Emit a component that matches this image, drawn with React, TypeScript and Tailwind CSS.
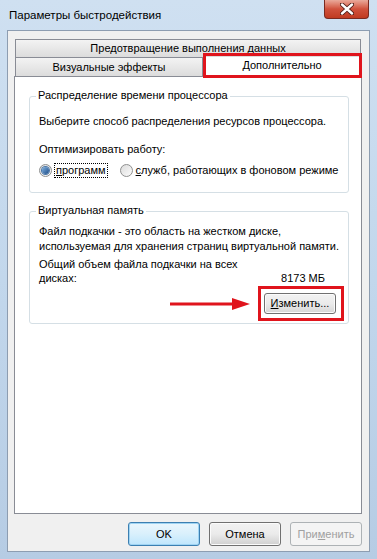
const font = { fontFamily: '"Liberation Sans", Arial, sans-serif' };

function Radio({ checked }: { checked?: boolean }) {
  return (
    <span className="flex h-[13px] w-[13px] shrink-0 items-center justify-center rounded-full border border-[#8e8f8f] bg-gradient-to-br from-[#dcdcdc] to-[#fbfbfb]">
      {checked && (
        <span className="h-[7px] w-[7px] rounded-full bg-gradient-to-br from-[#7fb2e2] to-[#1d4c86] ring-1 ring-[#4a77a8]" />
      )}
    </span>
  );
}

function Group({ title, className, children }: { title: string; className: string; children: React.ReactNode }) {
  return (
    <div className={`relative mx-[14px] mr-[12px] rounded-[3px] border border-[#d5dfe5] px-[9px] ${className}`}>
      <span className="absolute -top-[9px] left-[6px] bg-white px-[2px] leading-[15px]">{title}</span>
      {children}
    </div>
  );
}

function Btn({ children, variant }: { children: React.ReactNode; variant?: 'default' | 'disabled' }) {
  const look =
    variant === 'default'
      ? 'border-[#3c7fb1] bg-gradient-to-b from-[#eaf6fd] via-[#d9f0fc] to-[#bee6fd] shadow-[inset_0_0_0_1px_#9fd4f3]'
      : variant === 'disabled'
        ? 'border-[#adb2b5] bg-[#f4f4f4] text-[#a0a0a0]'
        : 'border-[#707070] bg-gradient-to-b from-[#f2f2f2] via-[#ebebeb] to-[#cfcfcf] shadow-[inset_0_0_0_1px_#fbfbfb]';
  return (
    <div className={`flex h-[24px] w-[72px] items-center justify-center rounded-[3px] border ${look}`}>{children}</div>
  );
}

export default function App() {
  return (
    <div
      className="flex h-[559px] w-[377px] flex-col whitespace-nowrap bg-gradient-to-b from-[#cfe0f1] via-[#c2d7ec] to-[#b6cce4] text-[11px] text-black"
      style={font}
    >
      {/* title bar */}
      <div className="flex h-[30px] shrink-0 items-start justify-between">
        <span className="mt-[8px] pl-[9px] text-[11.5px] leading-[15px]">Параметры быстродействия</span>
        <div className="mr-[8px] flex h-[19px] w-[45px] items-center justify-center rounded-b-[4px] border border-t-0 border-[#7a2a20] bg-gradient-to-b from-[#e9a99a] via-[#d0513c] to-[#c03a20]">
          <svg width="14" height="12" viewBox="0 0 14 12">
            <path d="M2 1.5 L12 10.5 M12 1.5 L2 10.5" stroke="#4a1a14" strokeWidth="4.2" strokeLinecap="round" />
            <path d="M2 1.5 L12 10.5 M12 1.5 L2 10.5" stroke="#fff" strokeWidth="2.4" strokeLinecap="round" />
          </svg>
        </div>
      </div>

      {/* client area */}
      <div className="mx-[7px] mb-[7px] flex flex-1 flex-col border border-[#8d9db1] bg-[#f0f0f0] pl-[6px] pr-[7px] pt-[8px]">
        {/* tabs */}
        <div className="mx-[1px] flex h-[18px] items-center justify-center border border-b-0 border-[#898c95] bg-gradient-to-b from-[#f3f3f3] to-[#dcdcdc]">
          Предотвращение выполнения данных
        </div>
        <div className="mx-[1px] flex h-[19px]">
          <div className="flex w-[188px] items-center justify-center border border-b-0 border-[#898c95] bg-gradient-to-b from-[#f3f3f3] to-[#dcdcdc]">
            Визуальные эффекты
          </div>
          <div className="relative flex flex-1 items-center justify-center bg-white">
            <span className="-mt-[2px]">Дополнительно</span>
            <div className="absolute -bottom-[2px] left-0 -right-[1px] -top-[4px] border-[3px] border-[#e0141c]" />
          </div>
        </div>

        {/* panel */}
        <div className="flex h-[438px] flex-col border border-[#898c95] bg-white">
          <Group title="Распределение времени процессора" className="mt-[19px] h-[97px] pt-[17px]">
            <div className="leading-[15px]">Выберите способ распределения ресурсов процессора.</div>
            <div className="mt-[13px] leading-[15px]">Оптимизировать работу:</div>
            <div className="mt-[5px] flex h-[16px] items-center">
              <Radio checked />
              <span className="ml-[2px] border border-dotted border-black px-[1px] leading-[13px]">
                <span className="underline">п</span>рограмм
              </span>
              <span className="ml-[12px]">
                <Radio />
              </span>
              <span className="ml-[3px] leading-[13px]">
                <span className="underline">с</span>лужб, работающих в фоновом режиме
              </span>
            </div>
          </Group>

          <Group title="Виртуальная память" className="mt-[18px] h-[113px] pt-[12px]">
            <div className="leading-[15px]">
              Файл подкачки - это область на жестком диске,
              <br />
              используемая для хранения страниц виртуальной памяти.
            </div>
            <div className="mt-[3px] flex items-end justify-between pr-[14px] leading-[14px]">
              <span>
                Общий объем файла подкачки на всех
                <br />
                дисках:
              </span>
              <span>8173 МБ</span>
            </div>
            <div className="-mr-[5px] mt-[1px] flex items-center justify-end">
              <svg width="80" height="12" viewBox="0 0 80 12" className="mr-[8px]">
                <path d="M0 6 H64" stroke="#e0141c" strokeWidth="3" />
                <path d="M62 0 L80 6 L62 12 Z" fill="#e0141c" />
              </svg>
              <div className="border-[3px] border-[#e0141c] pb-[4px] pl-[3px] pr-[5px] pt-[4px]">
                <div className="flex h-[21px] w-[72px] items-center justify-center rounded-[3px] border border-[#707070] bg-gradient-to-b from-[#f2f2f2] via-[#ebebeb] to-[#d6d6d6] shadow-[inset_0_0_0_1px_#fbfbfb]">
                  <span>
                    <span className="underline">И</span>зменить...
                  </span>
                </div>
              </div>
            </div>
          </Group>
        </div>

        {/* buttons */}
        <div className="mt-[8px] flex justify-end gap-[9px]">
          <Btn variant="default">OK</Btn>
          <Btn>Отмена</Btn>
          <Btn variant="disabled">
            <span>
              При<span className="underline">м</span>енить
            </span>
          </Btn>
        </div>
      </div>
    </div>
  );
}
